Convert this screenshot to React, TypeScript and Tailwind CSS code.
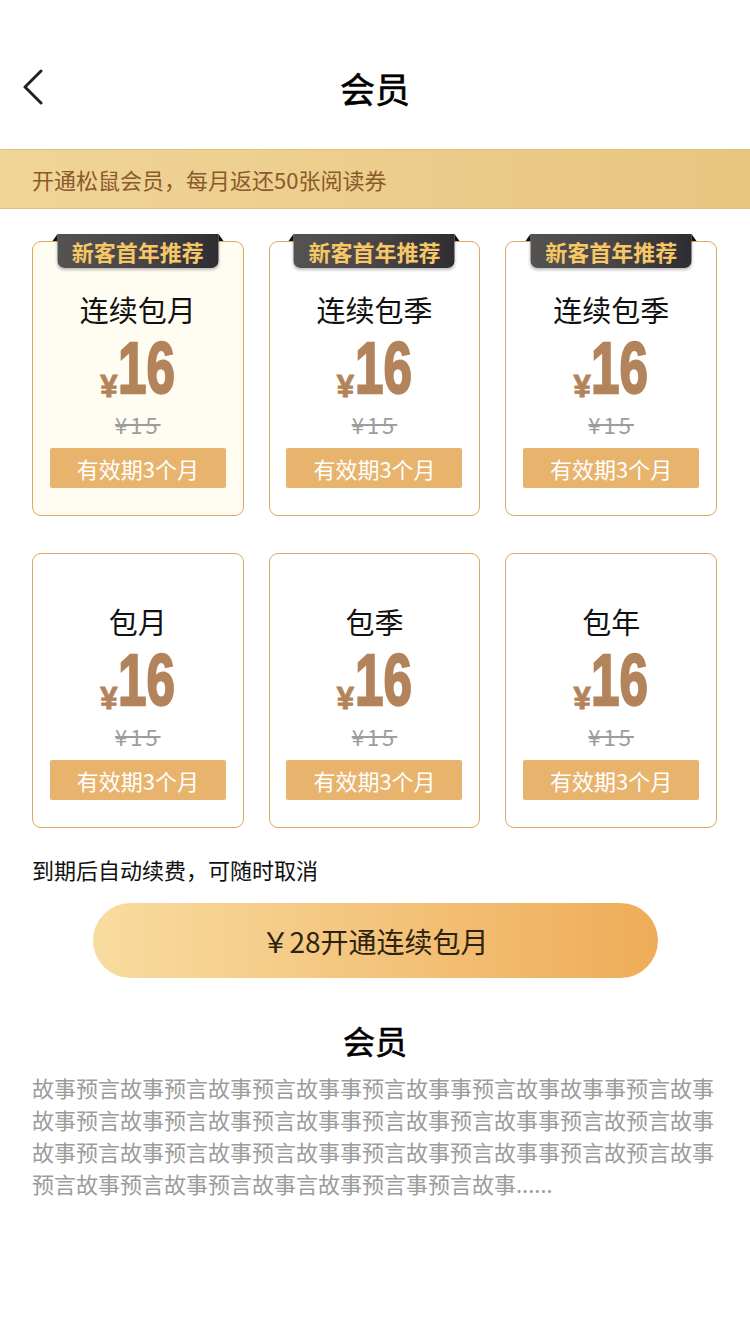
import React from 'react';

type Plan = { title: string; price: string; old: string; tip: string; badge?: boolean; active?: boolean };

const plans: Plan[] = [
    { title: '连续包月', price: '16', old: '¥15', tip: '有效期3个月', badge: true, active: true },
    { title: '连续包季', price: '16', old: '¥15', tip: '有效期3个月', badge: true },
    { title: '连续包季', price: '16', old: '¥15', tip: '有效期3个月', badge: true },
    { title: '包月', price: '16', old: '¥15', tip: '有效期3个月' },
    { title: '包季', price: '16', old: '¥15', tip: '有效期3个月' },
    { title: '包年', price: '16', old: '¥15', tip: '有效期3个月' },
];

const desc =
    '故事预言故事预言故事预言故事事预言故事事预言故事故事事预言故事' +
    '故事预言故事预言故事预言故事事预言故事预言故事事预言故预言故事' +
    '故事预言故事预言故事预言故事事预言故事预言故事事预言故预言故事' +
    '预言故事预言故事预言故事言故事预言事预言故事......';

function PlanCard({ plan }: { plan: Plan }) {
    return (
        <div
            className={`relative h-[275px] rounded-[9px] border border-[#dca761] flex flex-col items-center ${
                plan.active ? 'bg-[#fffdf2]' : 'bg-white'
            }`}
        >
            {/* ribbon badge over the top edge */}
            {plan.badge && (
                <div className="absolute top-[-8px] left-1/2 -translate-x-1/2 w-[161px] h-[34px]">
                    <span className="absolute left-[-5px] top-0 w-0 h-0 border-b-[7px] border-b-[#111] border-l-[5px] border-l-transparent" />
                    <span className="absolute right-[-5px] top-0 w-0 h-0 border-b-[7px] border-b-[#111] border-r-[5px] border-r-transparent" />
                    <div className="w-full h-full rounded-b-[7px] bg-gradient-to-r from-[#555252] via-[#4a4547] to-[#2d2d32] shadow-[0_2px_3px_rgba(0,0,0,0.25)] flex items-center justify-center text-[22px] leading-none font-bold text-[#f6c766]">
                        新客首年推荐
                    </div>
                </div>
            )}

            <div className="mt-[51px] h-[32px] leading-[32px] text-[29px] text-[#111]">{plan.title}</div>

            {/* condensed heavy price */}
            <div className="mt-[15px] h-[64px] flex items-end justify-center text-[#b3845b] font-['Liberation_Sans',sans-serif] font-bold">
                <span className="text-[31px] leading-none mb-[2px] [-webkit-text-stroke:1px_#b3845b]">¥</span>
                <span className="w-[58px] h-[64px] flex justify-center overflow-visible">
                    <span className="inline-block text-[64px] leading-[64px] origin-bottom scale-x-[0.8] scale-y-[1.14] [-webkit-text-stroke:2px_#b3845b]">
                        {plan.price}
                    </span>
                </span>
            </div>

            <div className="mt-[8px] h-[24px] leading-[24px] text-[22px] tracking-[3px] text-[#9d9d9d] line-through">
                {plan.old}
            </div>

            <div className="mt-[12px] w-[176px] h-[40px] rounded-[2px] bg-[#e8b46d] flex items-center justify-center text-[22px] text-white">
                {plan.tip}
            </div>
        </div>
    );
}

export default function App() {
    return (
        <main className="w-[750px] min-h-[1334px] bg-white font-['Noto_Sans_CJK_SC','Noto_Sans',sans-serif]">
            {/* Nav bar */}
            <header className="h-[149px] pt-[64px]">
                <div className="h-[46px] grid grid-cols-[1fr_auto_1fr] items-center">
                    <div className="pl-[22px] flex items-center">
                        <svg width="22" height="36" viewBox="0 0 22 36" fill="none">
                            <path d="M19 2 L3 18 L19 34" stroke="#222" strokeWidth="3" strokeLinecap="round" strokeLinejoin="round" />
                        </svg>
                    </div>
                    <h1 className="text-[35px] text-black leading-none [-webkit-text-stroke:0.6px_#000]">会员</h1>
                    <div />
                </div>
            </header>

            {/* Promo banner */}
            <div className="h-[60px] px-[32px] flex items-center bg-gradient-to-r from-[#f0d598] to-[#e8c57f] border-y border-[#e4c07a] text-[22px] text-[#8a5a2b]">
                开通松鼠会员，每月返还50张阅读券
            </div>

            {/* Plans */}
            <section className="pl-[32px] pr-[33px] pt-[32px] grid grid-cols-3 gap-x-[25px] gap-y-[37px]">
                {plans.map((p, i) => (
                    <PlanCard key={i} plan={p} />
                ))}
            </section>

            <p className="px-[32px] mt-[27px] h-[28px] leading-[28px] text-[22px] text-[#111]">到期后自动续费，可随时取消</p>

            <div className="mt-[20px] flex justify-center">
                <button className="w-[565px] h-[75px] rounded-full bg-gradient-to-r from-[#f8dc9f] to-[#eeac57] text-[28px] text-[#2e2310] flex items-center justify-center">
                    ￥28开通连续包月
                </button>
            </div>

            {/* Description */}
            <section className="mt-[40px] px-[32px]">
                <h2 className="h-[44px] leading-[44px] text-center text-[32px] text-black [-webkit-text-stroke:0.6px_#000]">会员</h2>
                <p className="mt-[9px] text-[22px] leading-[32px] text-[#9b9b9b] break-all">{desc}</p>
            </section>
        </main>
    );
}
